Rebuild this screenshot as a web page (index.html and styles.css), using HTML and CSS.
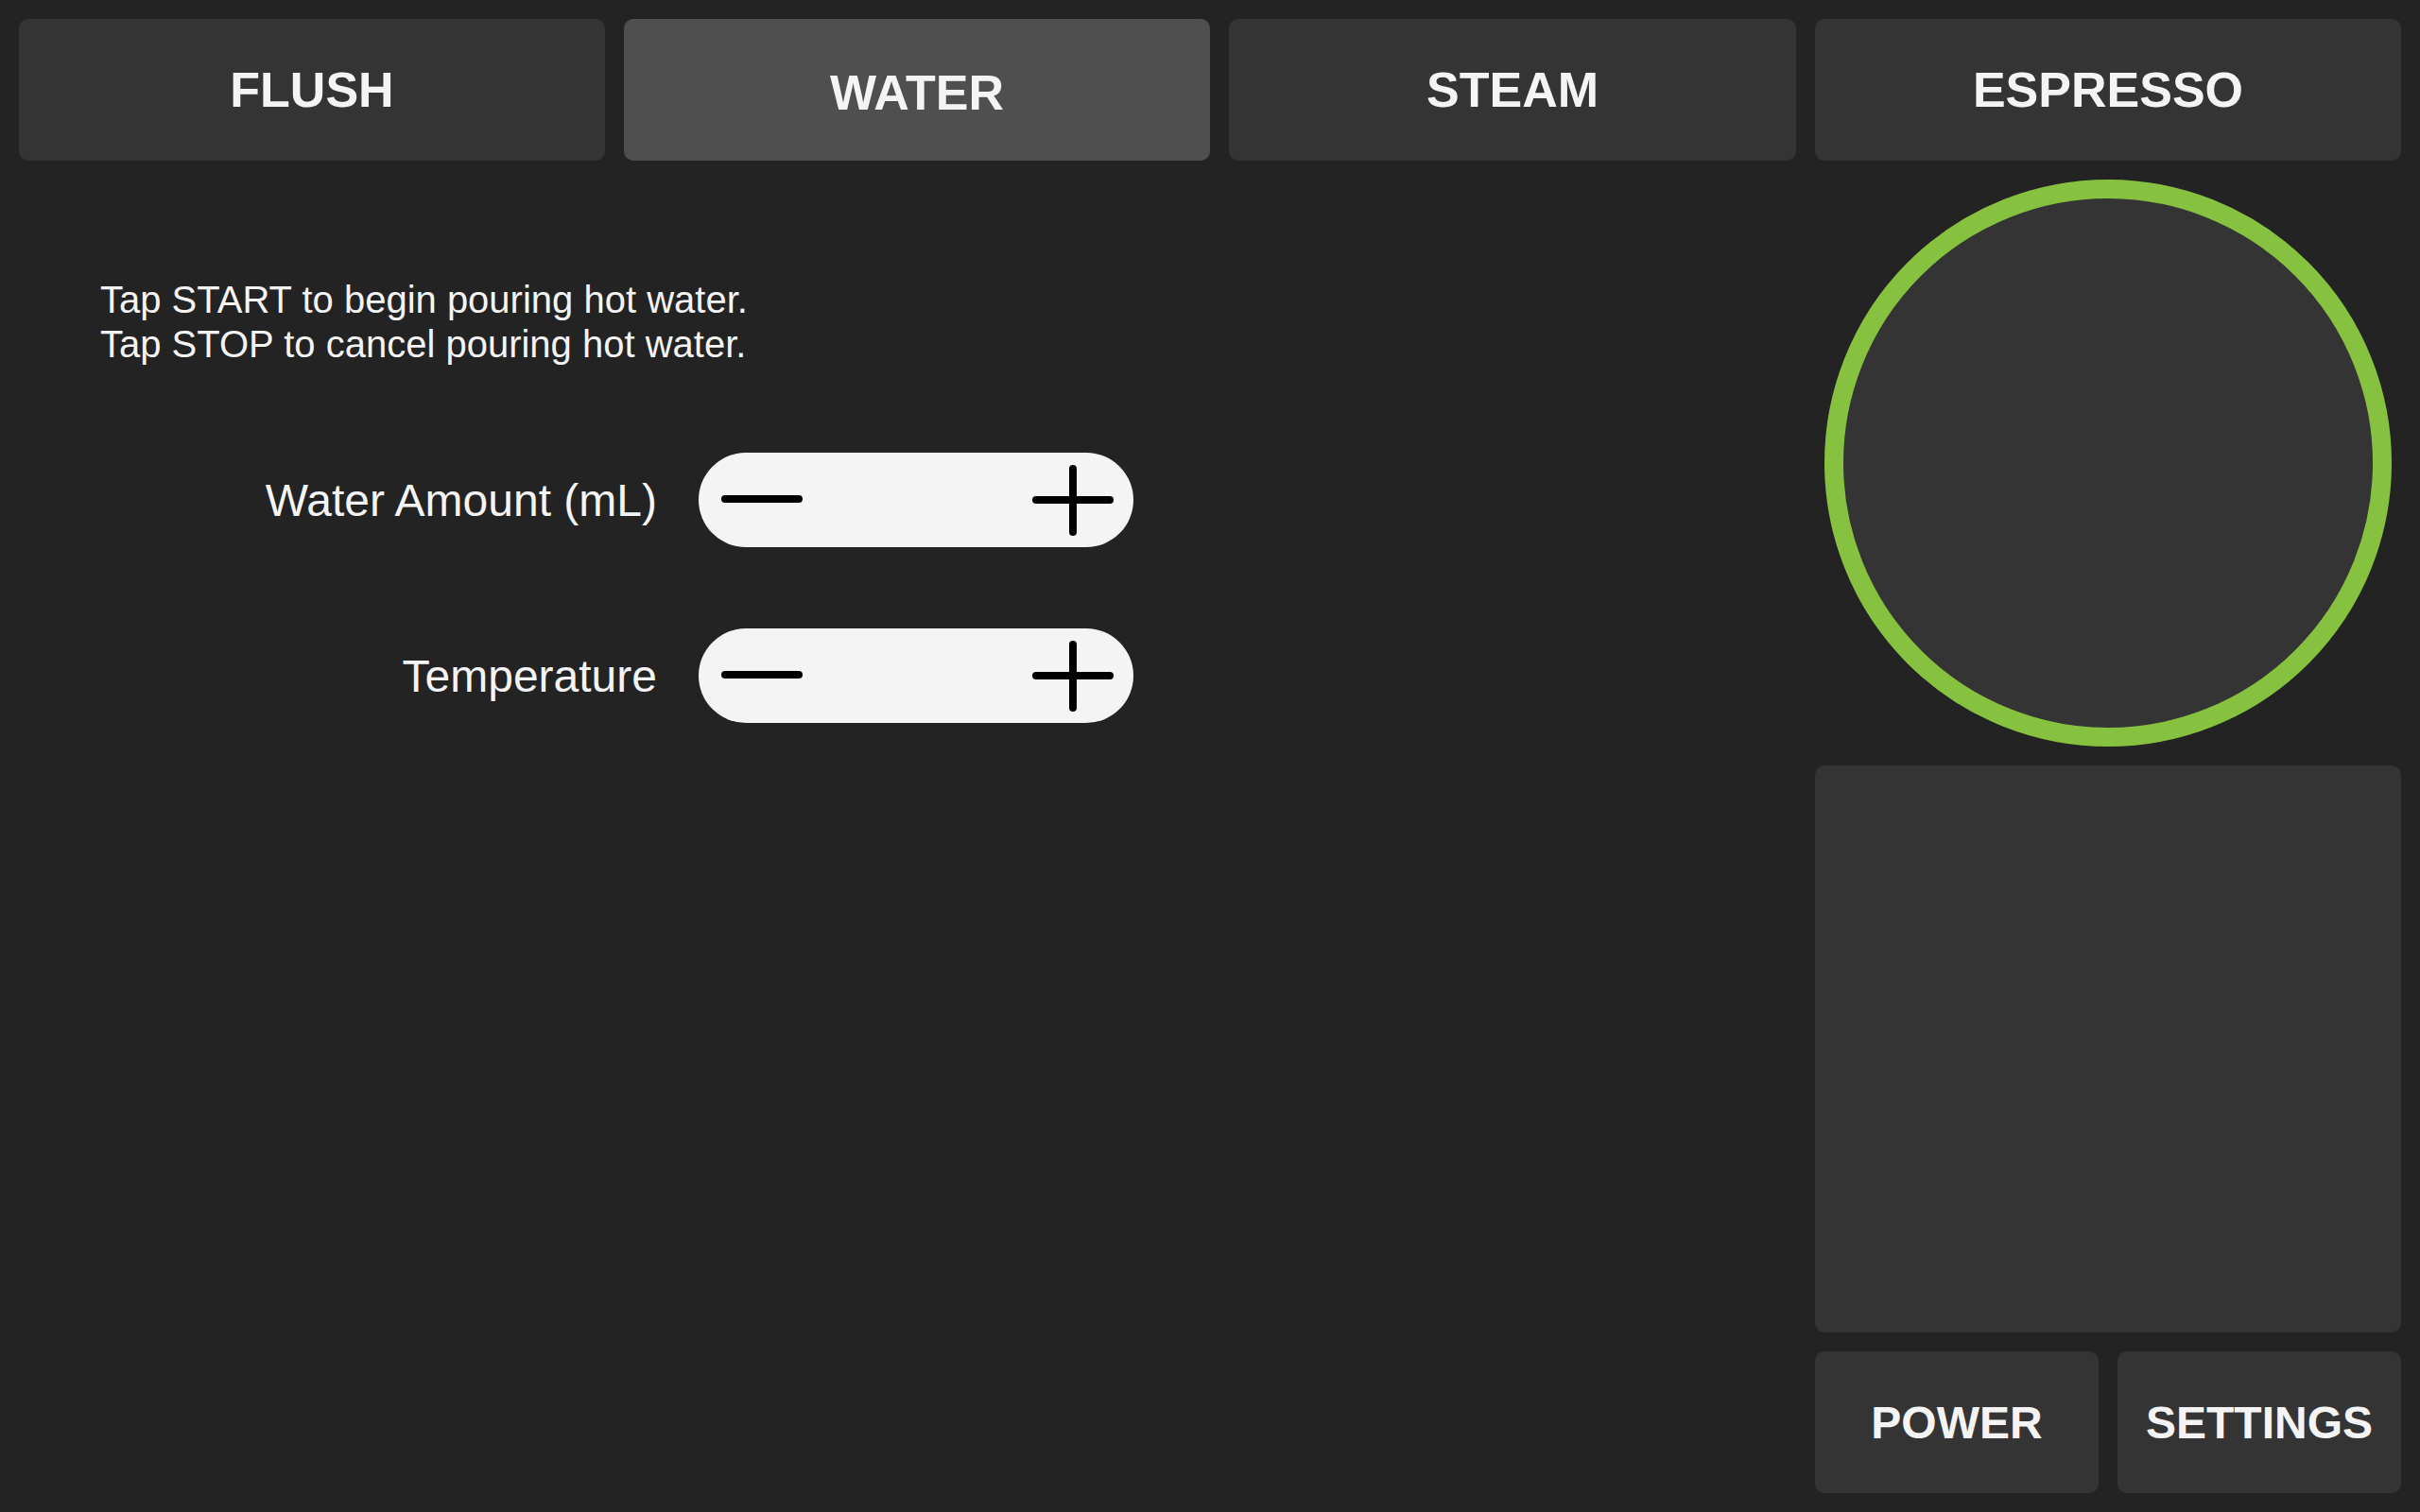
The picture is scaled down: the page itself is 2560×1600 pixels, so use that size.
FILE: index.html
```html
<!DOCTYPE html>
<html lang="en">
<head>
<meta charset="utf-8">
<title>Water</title>
<link rel="stylesheet" href="styles.css">
</head>
<body>
<div class="screen">
  <div class="tab">FLUSH</div>
  <div class="tab active">WATER</div>
  <div class="tab">STEAM</div>
  <div class="tab">ESPRESSO</div>

  <div class="content">
    <p class="help">Tap START to begin pouring hot water.<br>Tap STOP to cancel pouring hot water.</p>
    <div class="controls">
      <div class="label">Water Amount (mL)</div>
      <div class="pill">
        <svg class="icon" viewBox="0 0 86 86" width="86" height="86"><line x1="4" y1="42" x2="82" y2="42"/></svg>
        <svg class="icon" viewBox="0 0 86 86" width="86" height="86"><line x1="4" y1="43" x2="82" y2="43"/><line x1="43" y1="10" x2="43" y2="77"/></svg>
      </div>
      <div class="label">Temperature</div>
      <div class="pill">
        <svg class="icon" viewBox="0 0 86 86" width="86" height="86"><line x1="4" y1="42" x2="82" y2="42"/></svg>
        <svg class="icon" viewBox="0 0 86 86" width="86" height="86"><line x1="4" y1="43" x2="82" y2="43"/><line x1="43" y1="10" x2="43" y2="77"/></svg>
      </div>
    </div>
  </div>

  <div class="dial"></div>
  <div class="panel"></div>
  <div class="actions">
    <div class="btn">POWER</div>
    <div class="btn">SETTINGS</div>
  </div>
</div>
</body>
</html>
```

FILE: styles.css
```css
html, body {
  margin: 0;
  padding: 0;
  background: #232323;
}
body {
  width: 2560px;
  height: 1600px;
  overflow: hidden;
  font-family: "Liberation Sans", Arial, sans-serif;
  color: #f4f4f4;
}
.screen {
  box-sizing: border-box;
  width: 2560px;
  height: 1600px;
  padding: 20px;
  display: grid;
  grid-template-columns: 620px 620px 600px 620px;
  grid-template-rows: 150px 600px 600px 150px;
  gap: 20px;
}
.tab {
  background: #343434;
  border-radius: 10px;
  display: flex;
  align-items: center;
  justify-content: center;
  font-weight: bold;
  font-size: 52px;
  color: #f4f4f4;
}
.tab.active {
  background: #4f4f4f;
  padding-top: 5px;
}
.content {
  grid-column: 1 / 4;
  grid-row: 2 / 5;
  padding: 104px 0 0 86px;
}
.help {
  margin: 0;
  font-size: 40px;
  line-height: 47px;
}
.controls {
  margin-top: 91px;
  display: grid;
  grid-template-columns: 589px 460px;
  grid-auto-rows: 100px;
  column-gap: 44px;
  row-gap: 86px;
}
.label {
  font-size: 48px;
  display: flex;
  align-items: center;
  justify-content: flex-end;
}
.pill {
  background: #f4f4f4;
  border-radius: 50px;
  display: flex;
  align-items: center;
  justify-content: space-between;
  padding: 0 21px 0 24px;
}
.icon {
  display: block;
}
.icon line {
  stroke: #000;
  stroke-width: 8;
  stroke-linecap: round;
}
.dial {
  grid-column: 4;
  grid-row: 2;
  justify-self: center;
  width: 600px;
  height: 600px;
  box-sizing: border-box;
  border: 20px solid #86c13f;
  border-radius: 50%;
  background: #343434;
}
.panel {
  grid-column: 4;
  grid-row: 3;
  background: #343434;
  border-radius: 10px;
}
.actions {
  grid-column: 4;
  grid-row: 4;
  display: grid;
  grid-template-columns: 300px 300px;
  gap: 20px;
}
.btn {
  background: #343434;
  border-radius: 10px;
  display: flex;
  align-items: center;
  justify-content: center;
  font-weight: bold;
  font-size: 48px;
  color: #f4f4f4;
}
```
